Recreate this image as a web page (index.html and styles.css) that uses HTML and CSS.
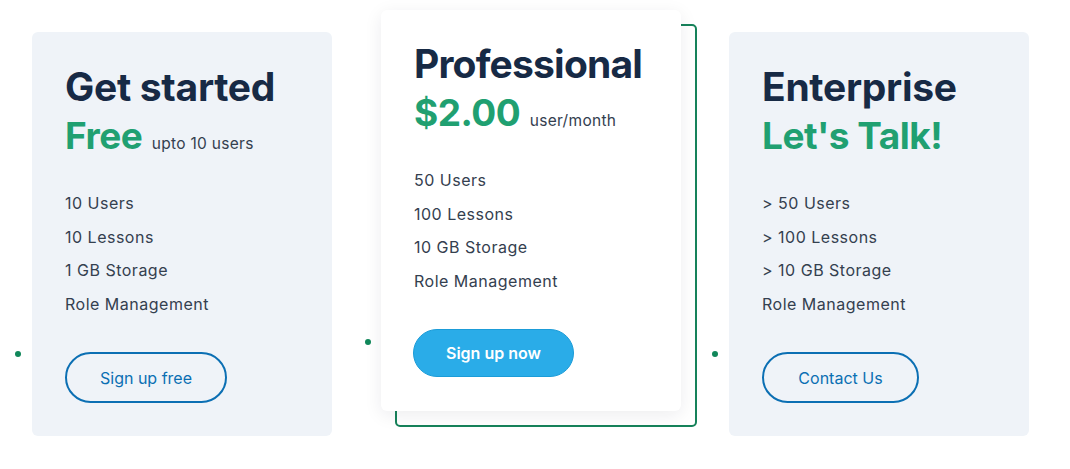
FILE: index.html
```html
<!DOCTYPE html>
<html lang="en">
<head>
<meta charset="utf-8">
<title>Pricing</title>
<link rel="stylesheet" href="styles.css">
</head>
<body>
<section class="pricing">
  <article class="card card--basic">
    <h2 class="card__title">Get started</h2>
    <p class="card__price"><span class="card__amount">Free</span> <span class="card__unit">upto 10 users</span></p>
    <ul class="card__list">
      <li>10 Users</li>
      <li>10 Lessons</li>
      <li>1 GB Storage</li>
      <li>Role Management</li>
    </ul>
    <a class="btn btn--outline" href="#">Sign up free</a>
  </article>
  <article class="card card--featured">
    <h2 class="card__title">Professional</h2>
    <p class="card__price"><span class="card__amount">$2.00</span> <span class="card__unit">user/month</span></p>
    <ul class="card__list">
      <li>50 Users</li>
      <li>100 Lessons</li>
      <li>10 GB Storage</li>
      <li>Role Management</li>
    </ul>
    <a class="btn btn--solid" href="#">Sign up now</a>
  </article>
  <article class="card card--enterprise">
    <h2 class="card__title">Enterprise</h2>
    <p class="card__price"><span class="card__amount">Let's Talk!</span></p>
    <ul class="card__list">
      <li>&gt; 50 Users</li>
      <li>&gt; 100 Lessons</li>
      <li>&gt; 10 GB Storage</li>
      <li>Role Management</li>
    </ul>
    <a class="btn btn--outline" href="#">Contact Us</a>
  </article>
</section>
</body>
</html>
```

FILE: styles.css
```css
* { box-sizing: border-box; }

html, body {
  margin: 0;
  font-family: "Inter", "Open Sans", sans-serif;
}

.pricing {
  position: relative;
  z-index: 0;
  display: flex;
  align-items: flex-start;
  gap: 49px;
  padding-left: 32px;
}

.card {
  position: relative;
  width: 300px;
  height: 404px;
  margin-top: 32px;
  padding: 32px 33px 0;
  background: #eff3f8;
  border-radius: 6px;
}

.card::after {
  content: "";
  position: absolute;
  left: -17px;
  top: 319px;
  width: 6px;
  height: 6px;
  border-radius: 50%;
  background: #10875a;
}

.card--featured {
  margin-top: 10px;
  height: 401px;
  padding-top: 31px;
  background: #ffffff;
  box-shadow: 0 4px 18px rgba(20, 30, 50, 0.08);
}

.card--featured::before {
  content: "";
  position: absolute;
  left: 14px;
  top: 14px;
  width: calc(100% - 2px);
  height: calc(100% - 2px);
  border: 2px solid #16825a;
  border-radius: 5px;
  z-index: -1;
}

.card--featured::after {
  left: -16px;
  top: 329px;
}

.card--featured .card__title {
  letter-spacing: -0.8px;
}

.card--enterprise {
  margin-left: -1px;
}

.card__title {
  margin: 0;
  font-size: 39px;
  line-height: 46px;
  font-weight: 700;
  color: #172a45;
  letter-spacing: -0.3px;
}

.card__price {
  margin: 3px 0 0;
  line-height: 46px;
  height: 46px;
  white-space: nowrap;
}

.card__amount {
  font-size: 37px;
  font-weight: 700;
  color: #20a071;
  letter-spacing: -0.5px;
}

.card__unit {
  margin-left: 5px;
  font-size: 15.5px;
  color: #34404f;
  letter-spacing: 0.3px;
}

.card__list {
  list-style: none;
  margin: 28px 0 0;
  padding: 0;
}

.card__list li {
  font-size: 16px;
  line-height: 33.5px;
  color: #34404f;
  letter-spacing: 0.5px;
}

.btn {
  display: inline-flex;
  align-items: center;
  justify-content: center;
  margin-top: 31px;
  height: 51px;
  border-radius: 26px;
  font-size: 16px;
  text-decoration: none;
}

.btn--outline {
  width: 162px;
  border: 2px solid #0b6fb3;
  color: #0b6fb3;
}

.card--enterprise .btn--outline {
  width: 157px;
}

.btn--solid {
  width: 161px;
  height: 48px;
  margin-left: -1px;
  background: #2aace8;
  border: 1px solid #1b9cd8;
  color: #ffffff;
  font-weight: 600;
}
```
